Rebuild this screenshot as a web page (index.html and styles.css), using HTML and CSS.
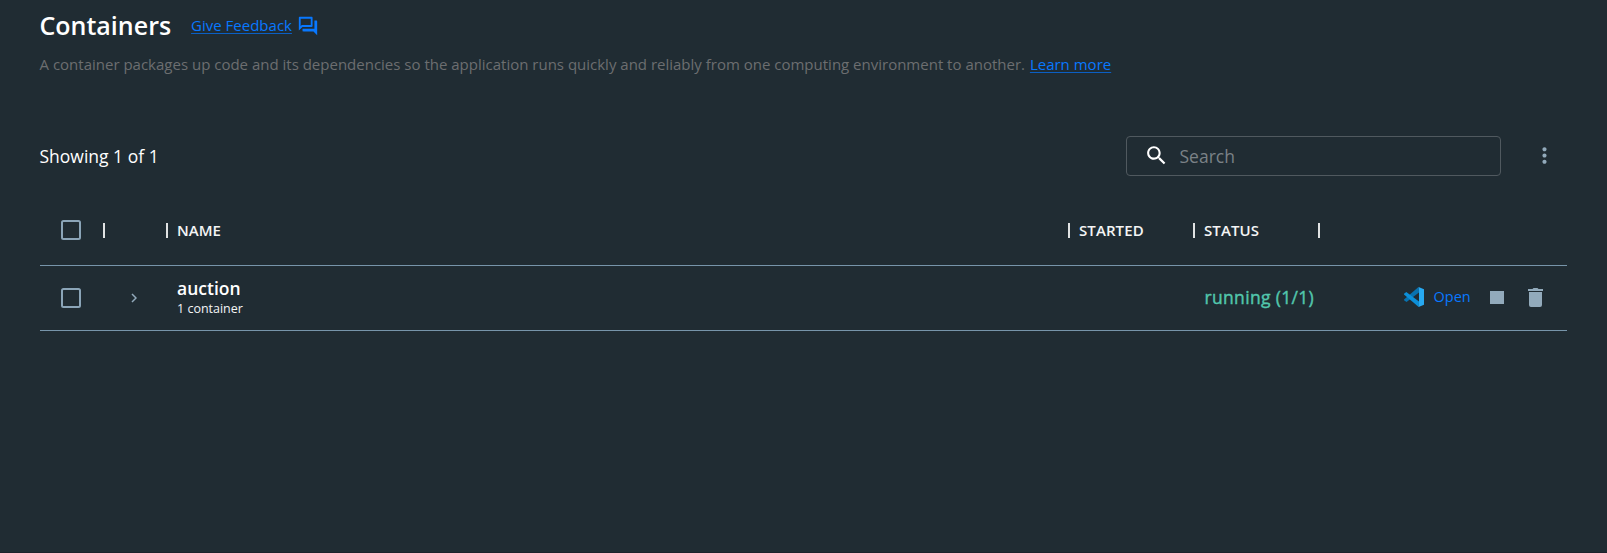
FILE: index.html
```html
<!DOCTYPE html>
<html lang="en">
<head>
<meta charset="utf-8">
<title>Containers</title>
<link rel="stylesheet" href="styles.css">
</head>
<body>
<main class="page">
  <header class="heading">
    <h1 class="title">Containers</h1>
    <a class="link feedback" href="#">Give Feedback</a>
    <svg class="feedback-icon" viewBox="0 0 24 24"><path d="M15 4v7H5.17L4 12.17V4h11m1-2H3c-.55 0-1 .45-1 1v14l4-4h10c.55 0 1-.45 1-1V3c0-.55-.45-1-1-1zm5 4h-2v9H6v2c0 .55.45 1 1 1h11l4 4V7c0-.55-.45-1-1-1z"/></svg>
  </header>
  <p class="intro"><span class="intro-text">A container packages up code and its dependencies so the application runs quickly and reliably from one computing environment to another.</span> <a class="link learn" href="#">Learn more</a></p>

  <section class="toolbar">
    <span class="count">Showing 1 of 1</span>
    <div class="search">
      <svg class="search-icon" viewBox="0 0 24 24"><path d="M15.5 14h-.79l-.28-.27C15.41 12.59 16 11.11 16 9.5 16 5.91 13.09 3 9.5 3S3 5.91 3 9.5 5.91 16 9.5 16c1.61 0 3.09-.59 4.23-1.57l.27.28v.79l5 4.99L20.49 19l-4.99-5zm-6 0C7.01 14 5 11.99 5 9.5S7.01 5 9.5 5 14 7.01 14 9.5 11.99 14 9.5 14z"/></svg>
      <span class="placeholder">Search</span>
    </div>
    <svg class="more-icon" viewBox="0 0 24 24"><path d="M12 8c1.100 0 2-.9 2-2s-.9-2-2-2-2 .9-2 2 .9 2 2 2zm0 2c-1.100 0-2 .9-2 2s.9 2 2 2 2-.9 2-2-.9-2-2-2zm0 6c-1.100 0-2 .9-2 2s.9 2 2 2 2-.9 2-2-.9-2-2-2z"/></svg>
  </section>

  <section class="table">
    <div class="row head">
      <div class="cell check"><span class="box"></span></div>
      <div class="cell sep"></div>
      <div class="cell sep"><span class="label name-label">NAME</span></div>
      <div class="cell sep"><span class="label started-label">STARTED</span></div>
      <div class="cell sep"><span class="label status-label">STATUS</span></div>
      <div class="cell sep"></div>
    </div>
    <div class="row body">
      <div class="cell check"><span class="box"></span></div>
      <div class="cell expand"><svg class="chevron" viewBox="0 0 6 10"><path d="M1 1l4 4-4 4"/></svg></div>
      <div class="cell name"><span class="name-main">auction</span><span class="name-sub">1 container</span></div>
      <div class="cell"></div>
      <div class="cell status">running (1/1)</div>
      <div class="cell actions">
        <svg class="vscode" viewBox="0 0 20 20">
          <path fill="#0872b0" d="M14.500 0 15 5.500 2.500 15 0 13.200V12.500L14.500 0z"/>
          <path fill="#0c8fd8" d="M0 6.800 2.300 5 15 14.600 14.700 20 0 7.400z"/>
          <path fill="#27a9f1" d="M14.600 0 20 2.300V17.700L14.600 20 15 14.600V5.500z"/>
        </svg>
        <span class="open">Open</span>
        <span class="stop"></span>
        <svg class="trash" viewBox="0 0 15 19"><path d="M0 1h4.500L5.500 0h4l1 1H15v2H0zM1 4h13v13q0 2-2 2H3q-2 0-2-2z"/></svg>
      </div>
    </div>
  </section>
</main>
</body>
</html>
```

FILE: styles.css
```css
* { box-sizing: border-box; }
body {
  margin: 0;
  height: 553px;
  overflow: hidden;
  background: #202c33;
  border-bottom: 1px solid #1c222b;
  color: #fff;
  font-family: "Open Sans", "Noto Sans", sans-serif;
}
.page { padding: 5px 40px 0 39.5px; }
.heading { display: flex; align-items: center; height: 40px; }
.title { margin: 0; font-size: 25px; line-height: 40px; font-weight: 600; }
.link { color: #0878ff; text-decoration: underline #0b5fc4; text-decoration-thickness: 1px; text-underline-offset: 2px; text-decoration-skip-ink: none; }
.feedback { margin-left: 20px; font-size: 15px; line-height: 40px; }
.feedback-icon { width: 22px; height: 22px; margin: 1px 0 0 5px; fill: #0878ff; }
.intro { margin: 7px 0 0; height: 24px; line-height: 24px; font-size: 15px; color: #6c6e70; white-space: nowrap; }
.learn { margin-left: 1px; }
.toolbar { display: flex; align-items: center; height: 40px; margin-top: 60px; }
.count { font-size: 17.5px; }
.search {
  display: flex; align-items: center;
  width: 375px; height: 40px; margin-left: auto; padding-left: 17px;
  border: 1px solid #50595f; border-radius: 4px;
}
.search-icon { width: 25px; height: 25px; margin-bottom: 1px; fill: #fff; }
.placeholder { margin-left: 10.500px; font-size: 17.5px; color: #7b8287; }
.more-icon { width: 25px; height: 25px; margin: 0 10.500px .5px 30.500px; fill: #92aabb; }
.table { margin-top: 19px; }
.row { display: grid; grid-template-columns: 63px 63px 902px 125px 125px 1fr; border-bottom: 1px solid #7795aa; }
.head { height: 71px; }
.body { height: 65px; }
.cell { display: flex; align-items: center; min-width: 0; }
.check { padding-left: 21.5px; }
.body .check, .expand { padding-bottom: 1px; }
.box { width: 20px; height: 20px; border: 2px solid #8ba5b8; border-radius: 2.5px; }
.sep::before { content: ""; width: 2px; height: 15px; margin-left: .5px; background: #e0e2e3; }
.label { margin: 0 0 1px 9px; font-size: 15px; font-weight: 600; color: #f4f5f5; }
.started-label { letter-spacing: .1px; }
.status-label { letter-spacing: .1px; }
.expand { padding-left: 28px; }
.chevron { width: 6px; height: 10px; fill: none; stroke: #92aabb; stroke-width: 1.5; }
.name { flex-direction: column; align-items: flex-start; justify-content: center; padding-left: 11.500px; }
.name-main { margin-top: -2px; font-size: 17.5px; line-height: 22px; font-weight: 600; }
.name-sub { margin-top: 1px; font-size: 12.5px; line-height: 18px; color: #f4f5f5; }
.status { padding: 0 0 2px 12px; color: #52c7ad; font-size: 17.5px; letter-spacing: .33px; -webkit-text-stroke: .4px #52c7ad; white-space: nowrap; }
.actions { padding: 0 0 2px 86.500px; }
.vscode { width: 20px; height: 20px; }
.open { margin: 0 0 2px 9.500px; font-size: 14.500px; color: #0878ff; }
.stop { width: 14px; height: 13px; margin-left: 19.300px; background: #92aabb; }
.trash { width: 15px; height: 19px; margin-left: 24px; fill: #92aabb; }
```
